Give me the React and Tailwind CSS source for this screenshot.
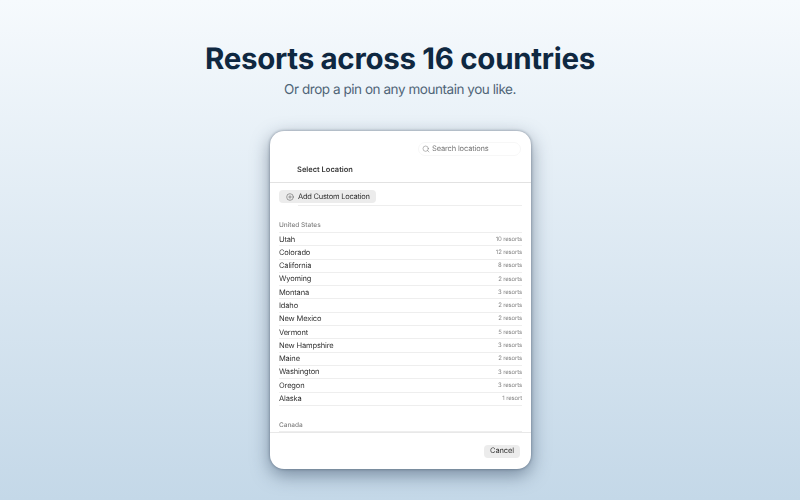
import { Search, CirclePlus } from 'lucide-react';

const usStates = [
  ['Utah', '10 resorts'],
  ['Colorado', '12 resorts'],
  ['California', '8 resorts'],
  ['Wyoming', '2 resorts'],
  ['Montana', '3 resorts'],
  ['Idaho', '2 resorts'],
  ['New Mexico', '2 resorts'],
  ['Vermont', '5 resorts'],
  ['New Hampshire', '3 resorts'],
  ['Maine', '2 resorts'],
  ['Washington', '3 resorts'],
  ['Oregon', '3 resorts'],
  ['Alaska', '1 resort'],
];

export default function App() {
  return (
    <div className="h-[500px] w-[800px] overflow-hidden flex flex-col items-center bg-gradient-to-b from-[#f6fafd] to-[#c4d8e8] font-['Inter',sans-serif] [text-rendering:geometricPrecision]">
      <h1 className="mt-[39px] h-[40px] text-[29.5px] leading-[40px] font-bold tracking-[-0.3px] whitespace-nowrap text-[#0f2841]">
        Resorts across 16 countries
      </h1>
      <p className="mt-[1px] h-[20px] text-[13.5px] leading-[20px] tracking-[-0.45px] whitespace-nowrap text-[#4f6477]">Or drop a pin on any mountain you like.</p>

      {/* Dialog */}
      <div className="mt-[31px] w-[261px] h-[338px] flex flex-col bg-white rounded-[14px] shadow-[0_6px_18px_rgba(40,60,85,0.5),0_0_3px_rgba(40,50,70,0.5)] overflow-hidden [will-change:transform]">
        <div className="h-[52px] border-b border-[#e2e2e2] shrink-0 flex flex-col">
          <div className="h-[25px] flex justify-end pr-[10px] pt-[11px]">
            <div className="w-[103px] h-[14px] flex items-center gap-[2px] pl-[3px] rounded-[7px] border border-[#f7f7f7] text-[7.5px] tracking-[-0.15px] whitespace-nowrap text-[#777]">
              <Search size={8} strokeWidth={1.5} />
              <span>Search locations</span>
            </div>
          </div>
          <div className="pl-[27px] mt-[7px] text-[7.5px] leading-[14px] font-semibold whitespace-nowrap text-[#3a3a3a]">Select Location</div>
        </div>

        <div className="flex-1 overflow-hidden px-[9px] pt-[7px]">
          <div className="w-[97px] h-[13px] flex items-center gap-[4px] pl-[7px] rounded-[4px] bg-[#ececec] text-[7.5px] tracking-[-0.25px] whitespace-nowrap text-[#333]">
            <CirclePlus size={8} strokeWidth={1.3} />
            <span>Add Custom Location</span>
          </div>
          <div className="mt-[2px] ml-[19px] h-[1px] bg-[#eeeeee]" />

          <div className="mt-[14px] h-[12px] text-[6.5px] leading-[10px] font-medium text-[#808080]">United States</div>
          <div className="border-t border-[#eeeeee]">
            {usStates.map(([name, count]) => (
              <div key={name} className="h-[13.3px] flex items-center justify-between border-b border-[#eeeeee] text-[7.5px] tracking-[-0.15px] whitespace-nowrap">
                <span className="text-[#333]">{name}</span>
                <span className="text-[6px] text-[#888]">{count}</span>
              </div>
            ))}
          </div>
          <div className="mt-[14px] h-[11px] text-[6.5px] leading-[10px] font-medium text-[#808080]">Canada</div>
          <div className="border-t border-[#eeeeee]" />
        </div>

        <div className="h-[37px] border-t border-[#e8e8e8] shrink-0 flex justify-end items-center pr-[11px]">
          <div className="w-[36px] h-[13px] rounded-[4px] bg-[#ececec] flex items-center justify-center text-[7.5px] tracking-[-0.1px] text-[#333]">Cancel</div>
        </div>
      </div>
    </div>
  );
}
